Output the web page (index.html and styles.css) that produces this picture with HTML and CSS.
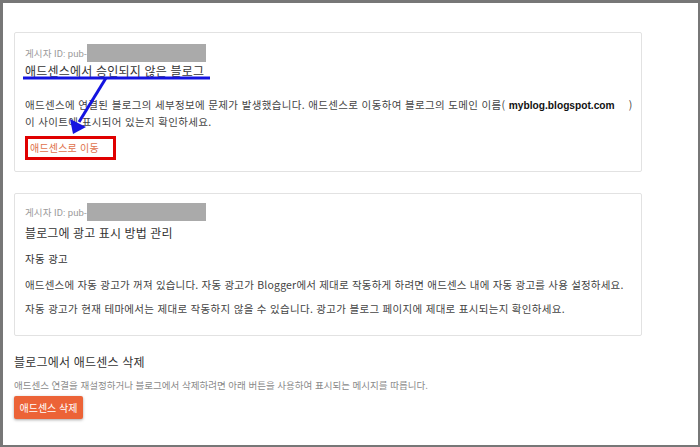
FILE: index.html
```html
<!DOCTYPE html>
<html lang="ko">
<head>
<meta charset="utf-8">
<link rel="stylesheet" href="styles.css">
</head>
<body>
<div class="frame">
  <section class="card card-first">
    <div class="pub"><span class="pub-label">게시자 ID: pub-</span><span class="pub-mask"></span></div>
    <h2 class="title">애드센스에서 승인되지 않은 블로그</h2>
    <p class="desc">애드센스에 연결된 블로그의 세부정보에 문제가 발생했습니다. 애드센스로 이동하여 블로그의 도메인 이름( <b class="domain">myblog.blogspot.com</b><span class="gap"></span>)<br>이 사이트에 표시되어 있는지 확인하세요.</p>
    <a class="link">애드센스로 이동</a>
  </section>

  <section class="card card-second">
    <div class="pub"><span class="pub-label">게시자 ID: pub-</span><span class="pub-mask"></span></div>
    <h2 class="title title-second">블로그에 광고 표시 방법 관리</h2>
    <p class="sub">자동 광고</p>
    <p class="line line-first">애드센스에 자동 광고가 꺼져 있습니다. 자동 광고가 Blogger에서 제대로 작동하게 하려면 애드센스 내에 자동 광고를 사용 설정하세요.</p>
    <p class="line">자동 광고가 현재 테마에서는 제대로 작동하지 않을 수 있습니다. 광고가 블로그 페이지에 제대로 표시되는지 확인하세요.</p>
  </section>

  <section class="remove">
    <h3 class="remove-title">블로그에서 애드센스 삭제</h3>
    <p class="remove-desc">애드센스 연결을 재설정하거나 블로그에서 삭제하려면 아래 버튼을 사용하여 표시되는 메시지를 따릅니다.</p>
    <button class="btn">애드센스 삭제</button>
  </section>

  <svg class="annot" width="700" height="447" viewBox="0 0 700 447">
    <rect x="23" y="76.5" width="187" height="3" fill="#1414e0"/>
    <line x1="106" y1="78" x2="79" y2="122" stroke="#1414e0" stroke-width="3"/>
    <polygon points="73,134 70,119 86,127" fill="#1414e0"/>
  </svg>
</div>
</body>
</html>
```

FILE: styles.css
```css
* { box-sizing: border-box; }
html, body { margin: 0; padding: 0; background: #fff; }
body {
  font-family: "Noto Sans CJK KR", "Noto Sans", sans-serif;
  color: #333;
}
.frame {
  position: relative;
  width: 700px;
  height: 447px;
  border-style: solid;
  border-color: #777;
  border-width: 3px 2px 2px 3px;
  padding: 29px 0 0 11px;
  overflow: hidden;
}
.card {
  width: 628px;
  border: 1px solid #e2e2e2;
  border-radius: 2px;
  background: #fff;
}
.card-first { padding: 11px 10px 11px; }
.card-second { margin-top: 21px; padding: 9px 10px 14px; height: 143px; }
.pub {
  display: flex;
  align-items: center;
  height: 18px;
}
.pub-label {
  font-family: Roboto, "Noto Sans CJK KR", sans-serif;
  font-size: 9.5px;
  color: #9a9a9a;
  letter-spacing: 0.1px;
}
.pub-mask {
  display: block;
  width: 119px;
  height: 18px;
  background: #aaaaaa;
}
.title {
  margin: 0;
  font-size: 12px;
  line-height: 18px;
  font-weight: 400;
  color: #333;
  letter-spacing: 0.2px;
}
.title-second { margin-top: 3px; letter-spacing: 0.1px; }
.desc {
  margin: 17px 0 0;
  font-size: 10.5px;
  line-height: 16px;
  color: #444;
  letter-spacing: 0.35px;
  white-space: nowrap;
}
.domain {
  font-family: "Liberation Sans", Arial, sans-serif;
  font-weight: 700;
  font-size: 10.2px;
  color: #111;
  letter-spacing: 0;
}
.gap { display: inline-block; width: 14px; }
.link {
  display: block;
  width: 91px;
  height: 24px;
  margin-top: 6px;
  border: 3px solid #e00000;
  padding-left: 2px;
  font-size: 10px;
  line-height: 18px;
  color: #e0724c;
  letter-spacing: 0.2px;
}
.sub {
  margin: 9px 0 0;
  font-size: 10.5px;
  line-height: 16px;
  color: #333;
  letter-spacing: 0.3px;
}
.line {
  margin: 8px 0 0;
  font-size: 10.5px;
  line-height: 16px;
  color: #444;
  letter-spacing: 0.3px;
}
.line-first { margin-top: 10px; letter-spacing: 0.2px; white-space: nowrap; }
.remove { padding-top: 17px; }
.remove-title {
  margin: 0;
  font-size: 12px;
  line-height: 18px;
  font-weight: 400;
  color: #333;
  letter-spacing: 0.2px;
}
.remove-desc {
  margin: 8px 0 0;
  font-size: 9.5px;
  line-height: 12px;
  color: #8a8a8a;
  letter-spacing: 0;
}
.btn {
  display: block;
  margin-top: 5px;
  width: 69px;
  height: 23px;
  border: 0;
  border-radius: 2px;
  background: #ec6337;
  color: #fff;
  font-family: "Noto Sans CJK KR", sans-serif;
  font-size: 10px;
  padding: 0;
  box-shadow: 0 1px 3px rgba(0,0,0,0.35);
}
.annot {
  position: absolute;
  top: -3px;
  left: -3px;
  pointer-events: none;
}
```
